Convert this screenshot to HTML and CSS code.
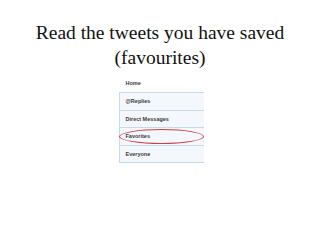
FILE: index.html
```html
<!DOCTYPE html>
<html>
<head>
<meta charset="utf-8">
<link rel="stylesheet" href="styles.css">
</head>
<body>
<div class="slide">
  <h1 class="title">Read the tweets you have saved<br>(favourites)</h1>
  <div class="panel">
    <div class="home">Home</div>
    <div class="row">@Replies</div>
    <div class="row">Direct Messages</div>
    <div class="row fav">Favorites<span class="ring"></span></div>
    <div class="row">Everyone</div>
  </div>
</div>
</body>
</html>
```

FILE: styles.css
```css
html, body {
  margin: 0;
  padding: 0;
  background: #ffffff;
}
.slide {
  width: 320px;
  height: 240px;
  display: flex;
  flex-direction: column;
  align-items: center;
}
.title {
  margin: 20px 0 0 0;
  font-family: "Liberation Serif", "Times New Roman", serif;
  font-weight: normal;
  font-size: 19.5px;
  line-height: 25px;
  color: #111;
  text-align: center;
}
.panel {
  margin: 4px 0 0 2px;
  width: 85px;
  font-family: "Liberation Sans", Arial, sans-serif;
  font-size: 5.5px;
  font-weight: bold;
  color: #3a3a3a;
}
.home {
  height: 18px;
  line-height: 18px;
  padding-left: 7px;
  background: #fff;
}
.row {
  position: relative;
  height: 16.5px;
  line-height: 16.5px;
  padding-left: 6px;
  background: #f4f8fc;
  border-top: 1px solid #c6dbea;
  border-left: 1px solid #c6dbea;
}
.row:last-child {
  border-bottom: 1px solid #c6dbea;
}
.ring {
  position: absolute;
  left: -1px;
  top: 1px;
  width: 83px;
  height: 13px;
  border: 1.2px solid #c8424a;
  border-radius: 50%;
}
```
